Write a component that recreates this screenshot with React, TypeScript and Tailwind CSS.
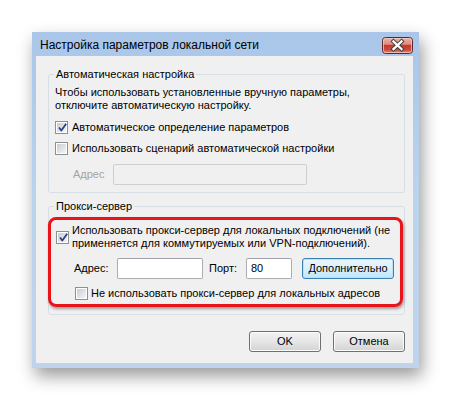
import React from 'react';

const font = { fontFamily: '"Liberation Sans", Arial, sans-serif' };

const CheckBox: React.FC<{ checked?: boolean }> = ({ checked }) => (
  <span className="relative flex-shrink-0 w-[13px] h-[13px] border border-[#8e8f8f] bg-white p-[1px]">
    <span className="block w-full h-full bg-gradient-to-br from-[#c9cdd3] to-[#f4f5f6]" />
    {checked && (
      <svg className="absolute left-[1px] top-[0px]" width="11" height="11" viewBox="0 0 11 11">
        <path d="M2 5.5 L4.3 8.5 L9.2 1.8" fill="none" stroke="#2a3f86" strokeWidth="1.8" strokeLinejoin="round" />
      </svg>
    )}
  </span>
);

const TextBox: React.FC<{ w: string; value?: string; disabled?: boolean }> = ({ w, value, disabled }) => (
  <div
    className={`${w} h-[21px] border rounded-[2px] px-[4px] flex items-center text-[11px] ${
      disabled ? 'border-[#ccd0d4] bg-[#f0f0f0]' : 'border-[#abadb3] border-t-[#a0a3aa] bg-white'
    }`}
  >
    {value}
  </div>
);

const Button: React.FC<{ label: string; w: string; focused?: boolean }> = ({ label, w, focused }) => (
  <div
    className={`${w} h-[21px] rounded-[3px] border flex items-center justify-center text-[11px] text-black ${
      focused
        ? 'border-[#3c7fb1] bg-gradient-to-b from-[#eaf6fd] via-[#d9f0fc] to-[#bee6fd] shadow-[inset_0_0_0_1px_#b8e3fa]'
        : 'border-[#707070] bg-gradient-to-b from-[#f2f2f2] via-[#e6e6e6] to-[#d3d3d3] shadow-[inset_0_0_0_1px_#fbfbfb]'
    }`}
  >
    {label}
  </div>
);

const CloseButton = () => (
  <svg className="mt-[5px]" width="31" height="17" viewBox="0 0 31 17">
    <defs>
      <linearGradient id="cl" x1="0" y1="0" x2="0" y2="1">
        <stop offset="0" stopColor="#eab4aa" />
        <stop offset="0.42" stopColor="#dd8d80" />
        <stop offset="0.5" stopColor="#c8392b" />
        <stop offset="0.78" stopColor="#cc4b3d" />
        <stop offset="1" stopColor="#e8998c" />
      </linearGradient>
    </defs>
    <rect x="0.5" y="0.5" width="30" height="16" rx="3" fill="url(#cl)" stroke="#5a2a2a" />
    <rect x="1.5" y="1.5" width="28" height="14" rx="2" fill="none" stroke="#f6cfc7" strokeOpacity="0.7" />
    <path d="M11.5 4.5 L19.5 12 M19.5 4.5 L11.5 12" stroke="#3d3d3d" strokeWidth="4.2" strokeLinecap="square" />
    <path d="M11.5 4.5 L19.5 12 M19.5 4.5 L11.5 12" stroke="#ffffff" strokeWidth="2.3" strokeLinecap="square" />
  </svg>
);

export default function App() {
  return (
    <div className="w-[451px] h-[401px] bg-white pt-[32px] pl-[32px] text-black" style={font}>
      <div className="w-[387px] h-[336px] flex flex-col bg-gradient-to-b from-[#a9c6e9] via-[#bcd3ed] to-[#bfd4ec] shadow-[3px_8px_16px_rgba(0,0,0,0.4)]">
        <div className="h-[24px] flex items-start justify-between pl-[8px] pr-[6px]">
          <span className="mt-[6px] text-[12px] leading-[14px] text-black">Настройка параметров локальной сети</span>
          <CloseButton />
        </div>

        <div className="flex-1 ml-[4px] mr-[6px] mb-[5px] bg-[#f0f0f0] flex flex-col pt-[12px] pl-[12px] pr-[8px] text-[11px] leading-[13px]">
          <fieldset className="border border-[#d5dfe5] rounded-[3px] px-[6px] pb-[7px]">
            <legend className="ml-[-1px] px-[2px] leading-[13px]">Автоматическая настройка</legend>
            <div className="pt-[5px]">
              <p>Чтобы использовать установленные вручную параметры,<br />отключите автоматическую настройку.</p>
              <div className="mt-[9px] flex items-center gap-[4px]">
                <CheckBox checked />
                <span>Автоматическое определение параметров</span>
              </div>
              <div className="mt-[8px] flex items-center gap-[4px]">
                <CheckBox />
                <span>Использовать сценарий автоматической настройки</span>
              </div>
              <div className="mt-[9px] flex items-center pl-[18px]">
                <span className="w-[40px] text-[#a3a3a3]">Адрес</span>
                <TextBox w="w-[194px]" disabled />
              </div>
            </div>
          </fieldset>

          <fieldset className="mt-[7px] border border-[#d5dfe5] rounded-[3px] pb-[7px]">
            <legend className="ml-[5px] px-[2px] leading-[13px]">Прокси-сервер</legend>
            <div className="mt-[4px] ml-[-1px] mr-[1px] border-[3px] border-[#e8141a] rounded-[8px] shadow-[1px_2px_3px_rgba(0,0,0,0.35)] pl-[5px] pt-[4px] pb-[4px]">
              <div className="flex items-center gap-[3px]">
                <CheckBox checked />
                <span>Использовать прокси-сервер для локальных подключений (не<br />применяется для коммутируемых или VPN-подключений).</span>
              </div>
              <div className="mt-[8px] flex items-center pl-[18px]">
                <span className="w-[43px]">Адрес:</span>
                <TextBox w="w-[86px]" />
                <span className="ml-[6px] w-[37px]">Порт:</span>
                <TextBox w="w-[46px]" value="80" />
                <div className="ml-[10px]">
                  <Button label="Дополнительно" w="w-[92px]" focused />
                </div>
              </div>
              <div className="mt-[8px] flex items-center gap-[3px] pl-[19px]">
                <CheckBox />
                <span>Не использовать прокси-сервер для локальных адресов</span>
              </div>
            </div>
          </fieldset>

          <div className="mt-[16px] flex justify-end gap-[12px]">
            <Button label="OK" w="w-[72px]" />
            <Button label="Отмена" w="w-[72px]" />
          </div>
        </div>
      </div>
    </div>
  );
}
